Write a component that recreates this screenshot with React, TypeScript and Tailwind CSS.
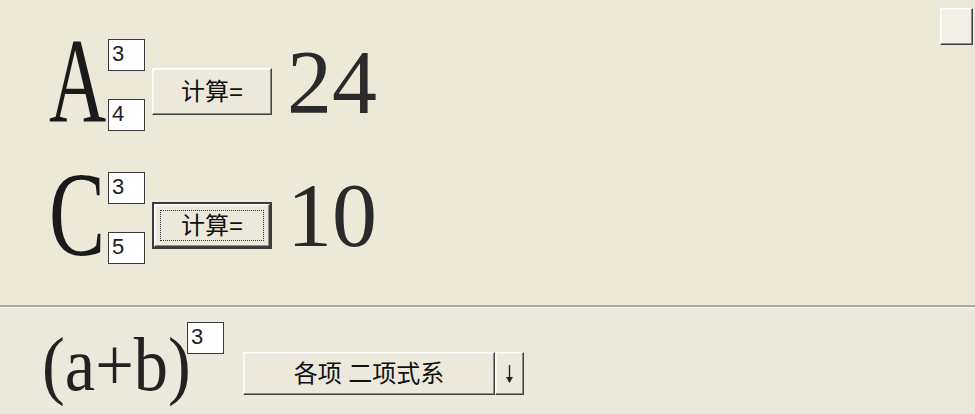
import React from 'react';

// classic raised 3D edge used by the buttons
const raised =
  'border border-t-white border-l-white border-r-[#404040] border-b-[#404040] shadow-[inset_-1px_-1px_0_#8d8b82,inset_1px_1px_0_#f7f6f0] bg-[#ece9dc]';

const serif = "font-['Liberation_Serif','Times_New_Roman',serif]";

function NumBox({ value, className = '' }: { value: string; className?: string }) {
  return (
    <div
      className={`w-[37px] h-[32px] bg-white border border-[#3a3a3a] text-[22px] leading-none pl-[3px] pt-[3px] text-[#222] ${className}`}
    >
      {value}
    </div>
  );
}

interface RowProps {
  letter: string;
  scaleClass: string;
  upper: string;
  lower: string;
  result: string;
  focused?: boolean;
}

function Row({ letter, scaleClass, upper, lower, result, focused }: RowProps) {
  return (
    <div className="flex items-start h-[92px]">
      <div className={`w-[59px] h-[92px] text-[120px] leading-[85px] text-[#1a1a1a] ${serif}`}>
        <span className={`inline-block origin-left ${scaleClass}`}>{letter}</span>
      </div>
      <div className="flex flex-col justify-between h-[92px]">
        <NumBox value={upper} />
        <NumBox value={lower} />
      </div>
      {focused ? (
        <button className="ml-[7px] mt-[30px] w-[120px] h-[47px] border-2 border-[#3c3c3c] p-0 flex">
          <div className={`flex-1 ${raised} flex items-center justify-center px-[5px] py-[5px]`}>
            <div className="w-full h-full border border-dotted border-[#333] flex items-center justify-center text-[24px] leading-none">
              计算=
            </div>
          </div>
        </button>
      ) : (
        <button
          className={`ml-[7px] mt-[29px] w-[120px] h-[47px] ${raised} flex items-center justify-center text-[24px] leading-none`}
        >
          计算=
        </button>
      )}
      <div className={`ml-[15px] text-[90px] leading-[88px] text-[#2a2a2a] ${serif}`}>{result}</div>
    </div>
  );
}

export default function App() {
  return (
    <div className="w-[975px] h-[414px] bg-[#ece9d8] flex flex-col overflow-hidden font-['Liberation_Sans','Noto_Sans_CJK_SC',sans-serif] text-[#111]">
      <div className="h-[305px] flex shrink-0">
        <div className="flex flex-col pl-[49px] pt-[39px] gap-[41px]">
          <Row letter="A" scaleClass="scale-x-[0.66]" upper="3" lower="4" result="24" />
          <Row letter="C" scaleClass="scale-x-[0.7]" upper="3" lower="5" result="10" focused />
        </div>
        <button className={`ml-auto mt-[8px] mr-[2px] w-[33px] h-[37px] ${raised} bg-[#f1efe6]`} />
      </div>

      <div className="flex-1 border-t-2 border-[#a6a6a6] shadow-[inset_0_1px_0_#f6f5ee] bg-[#ebe8dc] flex items-start pl-[42px]">
        <div className={`w-[145px] mt-[17px] text-[76px] leading-[80px] text-[#222] ${serif}`}>
          <span className="inline-block origin-left scale-x-[0.9] whitespace-nowrap">(a+b)</span>
        </div>
        <NumBox value="3" className="mt-[15px] w-[36px] h-[31px]" />
        <div className="ml-[19px] mt-[45px] w-[281px] h-[43px] flex">
          <div className={`w-[252px] h-full ${raised} flex items-center justify-center text-[24px] leading-none whitespace-pre`}>
            各项 二项式系
          </div>
          <div className={`w-[29px] h-full ${raised} flex items-center justify-center`}>
            <svg width="9" height="20" viewBox="0 0 9 20">
              <path d="M4.5 1 V18" stroke="#222" strokeWidth="1.4" />
              <path d="M1 13 L4.5 19 L8 13 Z" fill="#222" />
            </svg>
          </div>
        </div>
      </div>
    </div>
  );
}
